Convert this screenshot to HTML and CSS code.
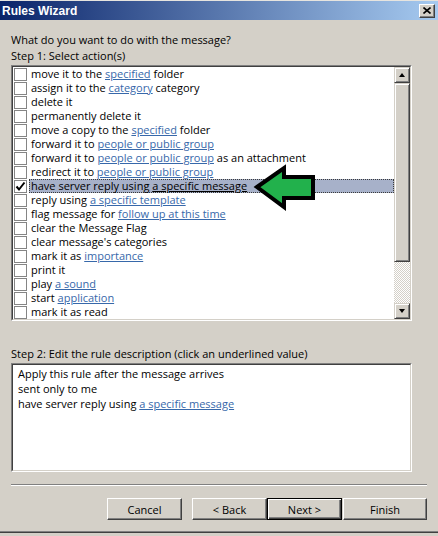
FILE: index.html
```html
<!DOCTYPE html>
<html>
<head>
<meta charset="utf-8">
<title>Rules Wizard</title>
<link rel="stylesheet" href="styles.css">
</head>
<body>
<div class="window">
  <div class="titlebar">
    <span class="title">Rules Wizard</span>
    <span class="close"><svg width="8" height="7" viewBox="0 0 8 7"><path d="M0.5 0.5 L7.5 6.5 M7.5 0.5 L0.5 6.5" stroke="#000" stroke-width="1.6" fill="none"/></svg></span>
  </div>
  <div class="content">
    <div class="label">What do you want to do with the message?</div>
    <div class="label">Step 1: Select action(s)</div>
    <div class="listbox"><div class="listinner">
      <ul class="rows">
        <li class="row"><span class="cb"></span><span class="txt">move it to the <a>specified</a> folder</span></li>
        <li class="row"><span class="cb"></span><span class="txt">assign it to the <a>category</a> category</span></li>
        <li class="row"><span class="cb"></span><span class="txt">delete it</span></li>
        <li class="row"><span class="cb"></span><span class="txt">permanently delete it</span></li>
        <li class="row"><span class="cb"></span><span class="txt">move a copy to the <a>specified</a> folder</span></li>
        <li class="row"><span class="cb"></span><span class="txt">forward it to <a>people or public group</a></span></li>
        <li class="row"><span class="cb"></span><span class="txt">forward it to <a>people or public group</a> as an attachment</span></li>
        <li class="row"><span class="cb"></span><span class="txt">redirect it to <a>people or public group</a></span></li>
        <li class="row sel"><span class="cb"><svg width="11" height="11" viewBox="0 0 11 11"><path d="M1.5 5.5 L4 8.5 L9.5 1.5" stroke="#000" stroke-width="2" fill="none"/></svg></span><span class="txt">have server reply using <a>a specific message</a></span></li>
        <li class="row"><span class="cb"></span><span class="txt">reply using <a>a specific template</a></span></li>
        <li class="row"><span class="cb"></span><span class="txt">flag message for <a>follow up at this time</a></span></li>
        <li class="row"><span class="cb"></span><span class="txt">clear the Message Flag</span></li>
        <li class="row"><span class="cb"></span><span class="txt">clear message's categories</span></li>
        <li class="row"><span class="cb"></span><span class="txt">mark it as <a>importance</a></span></li>
        <li class="row"><span class="cb"></span><span class="txt">print it</span></li>
        <li class="row"><span class="cb"></span><span class="txt">play <a>a sound</a></span></li>
        <li class="row"><span class="cb"></span><span class="txt">start <a>application</a></span></li>
        <li class="row"><span class="cb"></span><span class="txt">mark it as read</span></li>
      </ul>
      <div class="scrollbar">
        <div class="sbtn"><span class="tri up"></span></div>
        <div class="thumb"></div>
        <div class="track"></div>
        <div class="sbtn"><span class="tri down"></span></div>
      </div>
    </div></div>
    <div class="label step2">Step 2: Edit the rule description (click an underlined value)</div>
    <div class="descbox"><div class="descinner">
      <div class="dline">Apply this rule after the message arrives</div>
      <div class="dline">sent only to me</div>
      <div class="dline">have server reply using <a>a specific message</a></div>
    </div></div>
    <div class="sep"></div>
    <div class="buttons">
      <button class="btn cancel">Cancel</button>
      <button class="btn back">&lt; Back</button>
      <button class="btn next">Next &gt;</button>
      <button class="btn finish">Finish</button>
    </div>
  </div>
  <div class="framebottom"></div>
  <svg class="arrow" width="438" height="536" viewBox="0 0 438 536">
    <polygon points="257,187 284,168 284,177 313,177 313,198 284,198 284,207" fill="#22b14c" stroke="#000" stroke-width="4" stroke-linejoin="miter"/>
  </svg>
</div>
</body>
</html>
```

FILE: styles.css
```css
* { box-sizing: border-box; margin: 0; padding: 0; }
html, body { width: 438px; height: 536px; overflow: hidden; }
body {
  background: #d4d0c8;
  font-family: "Open Sans", "Noto Sans", sans-serif;
  font-size: 11px;
  color: #000;
}
.window {
  position: relative;
  width: 438px;
  height: 536px;
  display: flex;
  flex-direction: column;
  border-top: 1px solid #e6e4df;
  padding-bottom: 3px;
}
.titlebar {
  flex: none;
  height: 19px;
  display: flex;
  align-items: center;
  background: linear-gradient(to right, #0a246a, #a6caf0);
}
.title {
  font-family: "Liberation Sans", Arial, sans-serif;
  font-weight: bold;
  font-size: 12px;
  color: #fff;
  padding-left: 2px;
}
.close {
  margin-left: auto;
  margin-right: 3px;
  width: 16px;
  height: 14px;
  display: flex;
  align-items: center;
  justify-content: center;
  background: #d4d0c8;
  border: 1px solid;
  border-color: #fff #404040 #404040 #fff;
  box-shadow: inset -1px -1px #808080;
}
.content {
  padding: 12px 11px 0;
  display: flex;
  flex-direction: column;
}
.label { line-height: 16px; height: 16px; white-space: nowrap; }
a { color: #3768aa; text-decoration: underline; text-underline-offset: 1px; }
.listbox {
  margin-top: 1px;
  width: 401px;
  height: 256px;
  border: 1px solid;
  border-color: #808080 #fff #fff #808080;
}
.listinner {
  height: 100%;
  border: 1px solid;
  border-color: #404040 #d4d0c8 #d4d0c8 #404040;
  background: #fff;
  display: flex;
}
.rows { list-style: none; flex: 1; display: flex; flex-direction: column; }
.row { height: 14px; display: flex; align-items: center; white-space: nowrap; }
.cb {
  flex: none;
  width: 13px;
  height: 13px;
  margin-left: 1px;
  border: 1px solid #858585;
  background: #fff;
  display: flex;
  align-items: center;
  justify-content: center;
}
.txt {
  margin-left: 2px;
  padding: 0 1px;
  height: 14px;
  line-height: 12px;
  border: 1px dotted transparent;
}
.sel .txt {
  flex: 1;
  background: #a7b1c9;
  border-color: #3a3a3a;
}
.sel a { color: #000; }
.scrollbar { width: 16px; flex: none; display: flex; flex-direction: column; }
.sbtn, .thumb {
  background: #d4d0c8;
  border: 1px solid;
  border-color: #d4d0c8 #404040 #404040 #d4d0c8;
  box-shadow: inset 1px 1px #fff, inset -1px -1px #808080;
}
.sbtn { height: 16px; display: flex; align-items: center; justify-content: center; }
.thumb { height: 179px; }
.track {
  flex: 1;
  background: repeating-conic-gradient(#fff 0 25%, #d4d0c8 0 50%);
  background-size: 2px 2px;
}
.tri { width: 0; height: 0; border-left: 3.5px solid transparent; border-right: 3.5px solid transparent; }
.tri.up { border-bottom: 4px solid #000; }
.tri.down { border-top: 4px solid #000; }
.step2 { margin-top: 25px; }
.descbox {
  margin-top: 1px;
  width: 401px;
  height: 109px;
  border: 1px solid;
  border-color: #808080 #fff #fff #808080;
}
.descinner {
  height: 100%;
  border: 1px solid;
  border-color: #404040 #d4d0c8 #d4d0c8 #404040;
  background: #fff;
  padding: 1px 5px;
}
.dline { line-height: 15px; height: 15px; white-space: nowrap; }
.sep {
  margin-top: 12px;
  height: 2px;
  border-top: 1px solid #808080;
  border-bottom: 1px solid #fff;
}
.buttons { margin-top: 12px; display: flex; justify-content: flex-end; }
.btn {
  height: 22px;
  width: 75px;
  font-family: inherit;
  font-size: 11px;
  color: #000;
  background: #d4d0c8;
  border: 1px solid;
  border-color: #fff #404040 #404040 #fff;
  box-shadow: inset -1px -1px #808080;
}
.cancel { margin-right: 10px; }
.next {
  border-color: #000;
  box-shadow: inset 1px 1px #fff, inset -1px -1px #404040, inset -2px -2px #808080;
}
.finish { width: 84px; margin-left: 1px; }
.framebottom {
  margin-top: auto;
  height: 2px;
  background: #404040;
  border-top: 1px solid #808080;
}
.arrow { position: absolute; left: 0; top: -1px; pointer-events: none; }
```
